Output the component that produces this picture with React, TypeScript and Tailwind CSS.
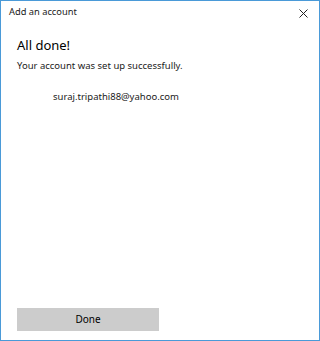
export default function App() {
  return (
    <div
      className="flex h-[341px] w-[320px] flex-col border border-[#4a9ad8] bg-white text-[#1a1a1a]"
      style={{ fontFamily: '"Noto Sans", "Open Sans", sans-serif' }}
    >
      <div className="flex h-[21px] items-center justify-between pl-[8px] pr-[11px]">
        <span className="text-[9.3px] leading-none">Add an account</span>
        <svg width="9" height="9" viewBox="0 0 9 9" className="mt-[3px] text-[#222]">
          <path d="M0.5 0.5 L8.5 8.5 M8.5 0.5 L0.5 8.5" stroke="currentColor" strokeWidth="1" />
        </svg>
      </div>
      <div className="flex flex-1 flex-col pl-[16px]">
        <h1 className="mt-[15px] text-[13px] leading-[16px] text-black">All done!</h1>
        <p className="mt-[6px] text-[9.5px] leading-[13px]">Your account was set up successfully.</p>
        <p className="mt-[18px] pl-[36px] text-[9.5px] leading-[13px]">suraj.tripathi88@yahoo.com</p>
        <div className="mt-auto mb-[9px]">
          <button className="h-[23px] w-[142px] bg-[#cccccc] text-[10px] text-black">Done</button>
        </div>
      </div>
    </div>
  );
}
